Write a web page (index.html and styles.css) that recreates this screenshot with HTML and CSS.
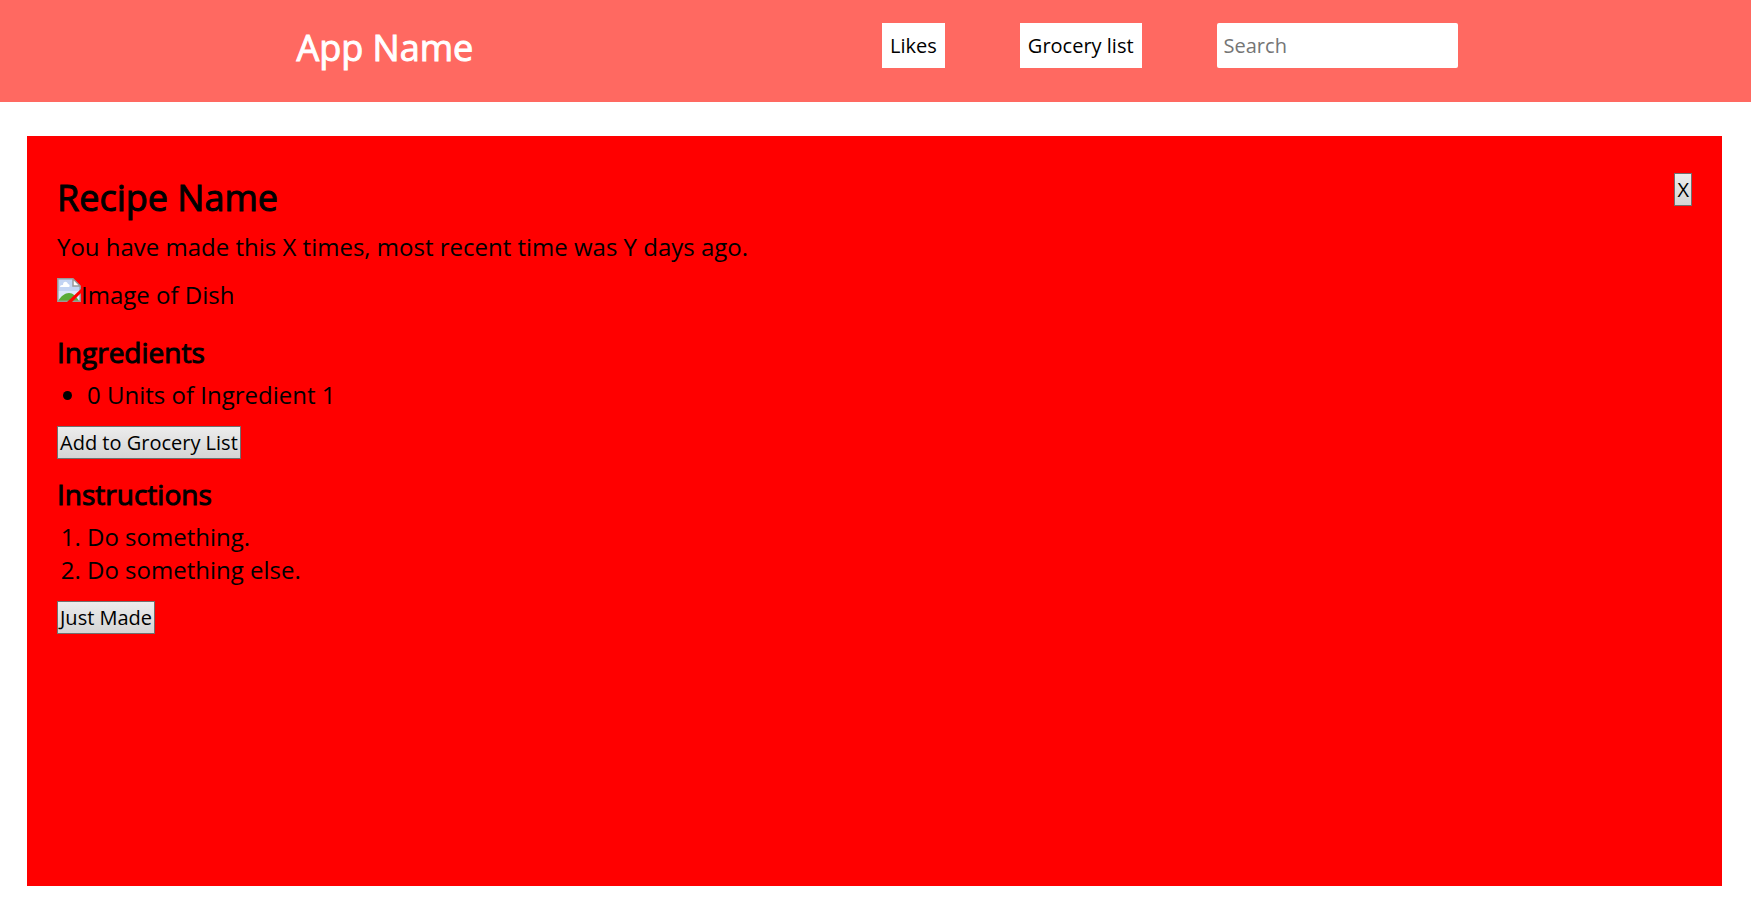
FILE: index.html
```html
<!DOCTYPE html>
<html lang="en">
<head>
  <meta charset="utf-8">
  <title>App Name</title>
  <link rel="stylesheet" href="styles.css">
</head>
<body>
  <header class="site-header">
    <h1 class="brand">App Name</h1>
    <nav class="site-nav">
      <button class="nav-button" type="button">Likes</button>
      <button class="nav-button" type="button">Grocery list</button>
      <input class="search" type="search" placeholder="Search" aria-label="Search">
    </nav>
  </header>
  <main class="recipe">
    <div class="recipe-head">
      <h2 class="recipe-title">Recipe Name</h2>
      <button class="button" type="button">X</button>
    </div>
    <p class="history">You have made this X times, most recent time was Y days ago.</p>
    <div class="dish">
      <svg class="dish-icon" viewBox="0 0 24 24" aria-hidden="true">
        <path fill="#c3d4f3" d="M1 1h15l7 7v15H1z"/>
        <path fill="#dce7fa" d="M1 13h22v10H1z"/>
        <path fill="#fff" d="M3 9c0-2 2-2 3-2 0-4 4-4 5-1 2 0 2 3 1 3z"/>
        <path fill="#5aab37" d="M1 23c3-5 7-8 11-8 4 0 7 3 10 8z"/>
        <path fill="#fff" d="M16 1v7h7z"/>
        <path fill="none" stroke="#999" stroke-width="1.5" d="M16 .8H.8v22.4h22.4V8L16 .8V8h7.200"/>
        <path fill="#f00" d="M24 11v4l-9 9h-5z"/>
      </svg>
      <span>Image of Dish</span>
    </div>
    <h3 class="section-title section-title-first">Ingredients</h3>
    <ul class="list">
      <li>0 Units of Ingredient 1</li>
    </ul>
    <button class="button" type="button">Add to Grocery List</button>
    <h3 class="section-title">Instructions</h3>
    <ol class="list">
      <li>Do something.</li>
      <li>Do something else.</li>
    </ol>
    <button class="button" type="button">Just Made</button>
  </main>
</body>
</html>
```
FILE: styles.css
```css
* {
  box-sizing: border-box;
}

body {
  display: flex;
  flex-direction: column;
  min-height: 100vh;
  margin: 0;
  background: #fff;
  color: #000;
  font-family: "Open Sans", sans-serif;
  font-size: 24px;
  font-weight: 400;
}

h1, h2, h3, p, ul, ol {
  margin: 0;
}

h1, h2, h3 {
  font-weight: 400;
  -webkit-text-stroke: 1px currentColor;
}

button, input {
  color: inherit;
  font: inherit;
  font-size: 20px;
}

.site-header {
  display: flex;
  justify-content: space-around;
  align-items: flex-start;
  padding: 23px 89px 29px 92px;
  background: #ff6961;
}

.brand {
  color: #fff;
  font-size: 36px;
  line-height: 50px;
}

.site-nav {
  display: flex;
  gap: 75px;
}

.nav-button {
  padding: 9px 8px;
  border: 0;
  background: #fff;
}

.search {
  width: 241px;
  padding: 9px 7px;
  border: 0;
  border-radius: 2px;
  background: #fff;
  appearance: none;
}

.search::placeholder {
  color: #757575;
}

.recipe {
  flex: 1;
  margin: 34px 29px 35px 27px;
  padding: 37px 30px;
  background: #f00;
}

.recipe-head {
  display: flex;
  justify-content: space-between;
  align-items: flex-start;
}

.recipe-title {
  font-size: 36px;
  line-height: 50px;
}

.button {
  padding: 2px;
  border: 1px solid #707070;
  background: linear-gradient(#ececec, #d5d5d5);
}

.history {
  margin-top: 7px;
}

.dish {
  display: flex;
  align-items: flex-start;
  margin-top: 15px;
}

.dish-icon {
  width: 24px;
  height: 24px;
}

.section-title {
  margin: 16px 0 7px;
  font-size: 28px;
  line-height: 38px;
}

.section-title-first {
  margin-top: 22px;
}

.list {
  margin-bottom: 13px;
  padding-left: 30px;
}
```
